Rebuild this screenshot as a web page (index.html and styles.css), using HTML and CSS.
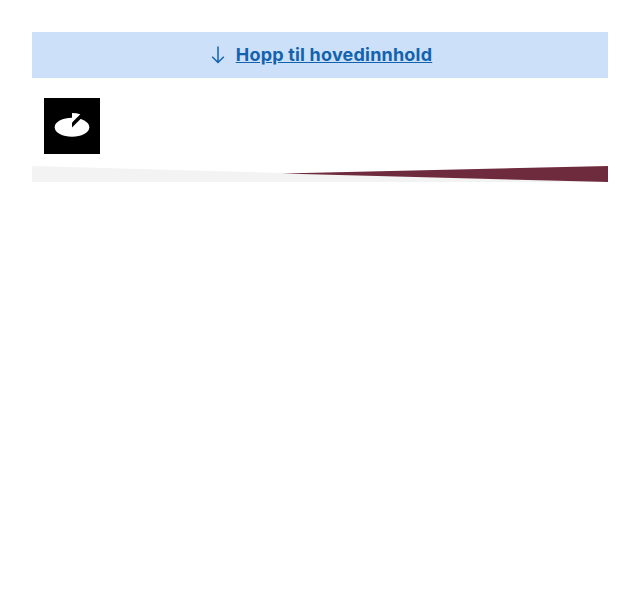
FILE: index.html
```html
<!DOCTYPE html>
<html lang="nb">
<head>
<meta charset="utf-8">
<title>Hopp til hovedinnhold</title>
<link rel="stylesheet" href="styles.css">
</head>
<body>
<a class="skip-link" href="#main">
  <svg class="skip-icon" viewBox="0 0 24 24" fill="none" stroke="currentColor" stroke-width="1.5" aria-hidden="true"><path d="M12 3.5V19.5M6.2 13.7L12 19.5L17.8 13.7"/></svg>
  <span class="skip-text">Hopp til hovedinnhold</span>
</a>
<header class="header">
  <svg class="logo" viewBox="0 0 56 56" aria-hidden="true">
    <rect width="56" height="56"/>
    <ellipse cx="28" cy="29.3" rx="17.3" ry="9.5" fill="#fff"/>
    <path d="M28 24.5L35 15H39L36.8 20.7L28 29.5Z"/>
    <path d="M28 15Q32.5 15 36.3 16.2L28 24.6Z" fill="#fff"/>
  </svg>
</header>
<svg class="divider" viewBox="0 0 576 16" preserveAspectRatio="none" aria-hidden="true">
  <defs><linearGradient id="wedge" gradientUnits="userSpaceOnUse" x1="250" y1="0" x2="253" y2="17"><stop offset="0" stop-color="#24382b"/><stop offset=".55" stop-color="#702b3f"/><stop offset="1" stop-color="#6f2b3e"/></linearGradient></defs>
  <path d="M0 0L576 16H0Z" fill="#f3f3f3"/>
  <path d="M250 7.5L576 0V16Z" fill="url(#wedge)"/>
</svg>
<main id="main"></main>
</body>
</html>
```
FILE: styles.css
```css
body {
  margin: 0;
  padding: 32px;
  background: #fff;
  font-family: Inter, sans-serif;
}

.skip-link {
  display: flex;
  align-items: center;
  justify-content: center;
  gap: 6px;
  height: 46px;
  padding-right: 2px;
  background: #cce1f9;
  color: #1362ae;
  font-size: 18px;
  font-weight: 600;
  font-variation-settings: "opsz" 14;
  line-height: 28px;
}

.skip-icon {
  width: 24px;
  height: 24px;
}

.skip-text {
  font-weight: 700;
  letter-spacing: 0.2px;
}

.header {
  padding: 20px 12px 12px;
}

.logo {
  display: block;
  width: 56px;
  height: 56px;
}

.divider {
  display: block;
  width: 100%;
  height: 16px;
}
```
